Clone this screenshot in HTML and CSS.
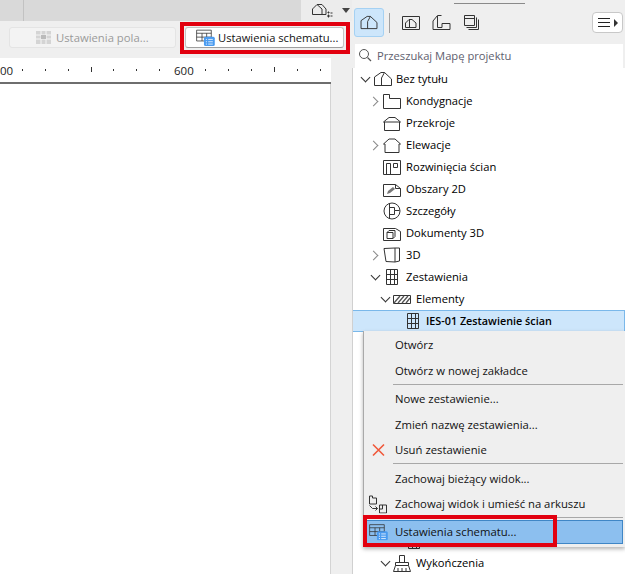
FILE: index.html
```html
<!DOCTYPE html>
<html lang="pl">
<head>
<meta charset="utf-8">
<title>Mapa projektu</title>
<link rel="stylesheet" href="styles.css">
</head>
<body>
<svg class="defs" width="0" height="0" aria-hidden="true">
  <defs>
    <symbol id="i-table" viewBox="0 0 24 22">
      <path d="M.5 1.500h19v14H.5zM.5 5.500h19M.5 10.500h19M7.500 5.500v10M13.500 5.500v10" fill="none" stroke="#333"/>
      <rect x="10" y="10" width="14" height="12" rx="2" fill="#4a9bf0"/>
      <path d="M12.500 13.500h1.500M15.500 13.500h6M12.500 16.500h1.500M15.500 16.500h6M12.500 19.500h1.500M15.500 19.500h6" stroke="#fff" fill="none"/>
    </symbol>
    <symbol id="i-house" viewBox="0 0 20 16">
      <path d="M1.500 14.500V6L8 1.500h3.500L18.500 8v6.500zM8.500 14.500V7L11.500 1.500" fill="none" stroke="#333"/>
    </symbol>
    <symbol id="i-grid" viewBox="0 0 14 18">
      <path d="M1.500 1.500h11v15h-11zM1.500 6.500h11M1.500 11.500h11M5.500 1.500v15M9.500 1.500v15" fill="none" stroke="#333"/>
    </symbol>
  </defs>
</svg>
<div class="app">
  <main class="left">
    <div class="tabbar">
      <div class="tab-empty"><span class="tab-edge"></span></div>
      <div class="tab-tool">
        <svg class="tool-icon" width="22" height="16" viewBox="0 0 22 16"><path d="M1.500 11.500V6L6 1.500h5L15 6v5.500zM6 1.500 11 6v5.500" fill="none" stroke="#333"/><path d="M17 9h1v1h-1zM17 12h1v2h-1zM19.500 10h2M19.500 13h2" fill="#333" stroke="#333"/></svg>
        <span class="caret-down"></span>
      </div>
    </div>
    <div class="buttonbar">
      <button class="btn btn-off" type="button">
        <svg width="16" height="13" viewBox="0 0 16 13"><path d="M0 0h15v13H0z" fill="#d4d4d4"/><path d="M5 0v13M10 0v13M0 4h15M0 8h15" stroke="#f5f5f5"/><path d="M5 4h5v4H5z" fill="#bbb"/></svg>
        <span>Ustawienia pola...</span>
      </button>
      <div class="mark-top">
        <button class="btn btn-on" type="button">
          <svg width="19" height="17"><use href="#i-table"/></svg>
          <span>Ustawienia schematu...</span>
        </button>
      </div>
    </div>
    <div class="canvas">
      <div class="ruler">
        <div class="ticks"></div>
        <span class="major m1"></span>
        <span class="major m2"></span>
        <span class="ruler-num n500">00</span>
        <span class="ruler-num n600">600</span>
      </div>
      <div class="sheet"></div>
    </div>
  </main>
  <aside class="right">
    <div class="grip"></div>
    <div class="toolbar">
      <span class="tool tool-on"><svg width="20" height="15"><use href="#i-house"/></svg></span>
      <span class="tool-sep"></span>
      <span class="tool"><svg width="18" height="14" viewBox="0 0 18 14"><path d="M.5.500h17v13H.5z" fill="none" stroke="#333"/><path d="M3.500 11.500V7L7 3.500h3l4 3.500v4.500zM7.500 4v7.500" fill="none" stroke="#333"/></svg></span>
      <span class="tool"><svg width="19" height="16" viewBox="0 0 19 16"><path d="M1 14.500V6L5.500.500h4M1 14.500h17v-6H10v4H5.500V1" fill="none" stroke="#333"/></svg></span>
      <span class="tool"><svg width="17" height="17" viewBox="0 0 17 17"><path d="M1.500 1.500h10v10h-10zM1.500 4.500h10M13.500 3.500v10h-10M15.500 5.500v10h-10" fill="none" stroke="#333"/></svg></span>
      <button class="menu-btn" type="button"><span class="bars"></span><span class="caret-right"></span></button>
    </div>
    <div class="search">
      <svg width="14" height="14" viewBox="0 0 14 14"><circle cx="6" cy="6" r="4.500" fill="none" stroke="#555"/><path d="M9.500 9.500 13 13" stroke="#555" stroke-width="1.300"/></svg>
      <span>Przeszukaj Mapę projektu</span>
    </div>
    <ul class="tree">
      <li class="row lv0"><span class="chev down"></span><svg class="ico" width="20" height="16"><use href="#i-house"/></svg><span>Bez tytułu</span></li>
      <li class="row lv1"><span class="chev"></span><svg class="ico" width="18" height="15" viewBox="0 0 18 15"><path d="M.5.500h6v4h11v10H.5z" fill="none" stroke="#333"/></svg><span>Kondygnacje</span></li>
      <li class="row lv1"><span class="nochev"></span><svg class="ico" width="18" height="15" viewBox="0 0 18 15"><path d="M.5 6 6 1.500h6L17.500 6M1.500 6v8.500h15V6M.5 6h17" fill="none" stroke="#333"/></svg><span>Przekroje</span></li>
      <li class="row lv1"><span class="chev"></span><svg class="ico" width="18" height="15" viewBox="0 0 18 15"><path d="M.5 6 6 1h6l5.500 5h-1.500v8.500H2V6z" fill="none" stroke="#333"/></svg><span>Elewacje</span></li>
      <li class="row lv1"><span class="nochev"></span><svg class="ico" width="18" height="15" viewBox="0 0 18 15"><path d="M.5.500h17v14H.5zM3.500 3.500h4v11h-4zM10.500 3.500h4v4h-4z" fill="none" stroke="#333"/></svg><span>Rozwinięcia ścian</span></li>
      <li class="row lv1"><span class="nochev"></span><svg class="ico" width="18" height="15" viewBox="0 0 18 15"><path d="M.5 2.500h12l5 4v8H.500zM12.500 2.500v4h5" fill="none" stroke="#333"/><path d="M4 12l1-3 5-4 2 2-5 4z" fill="#777"/></svg><span>Obszary 2D</span></li>
      <li class="row lv1"><span class="nochev"></span><svg class="ico" width="18" height="18" viewBox="0 0 18 18"><circle cx="9" cy="9" r="8" fill="none" stroke="#333"/><path d="M6.500 1.500v15M6.500 5.500h5v3h5M6.500 12.500h5v-4" fill="none" stroke="#333"/></svg><span>Szczegóły</span></li>
      <li class="row lv1"><span class="nochev"></span><svg class="ico" width="18" height="15" viewBox="0 0 18 15"><path d="M.5 2.500h12l5 3v9H.500zM4 6.500h6v6H4zM4 6.500l2-2h6v6l-2 2" fill="none" stroke="#333"/></svg><span>Dokumenty 3D</span></li>
      <li class="row lv1"><span class="chev"></span><svg class="ico" width="18" height="16" viewBox="0 0 18 16"><path d="M1 1.500 3 14.500 12 15V1zM12 1h4.500v13L12 15" fill="none" stroke="#333"/></svg><span>3D</span></li>
      <li class="row lv1"><span class="chev down"></span><svg class="ico" width="18" height="18" viewBox="-2 0 18 18"><use href="#i-grid" width="14" height="18"/></svg><span>Zestawienia</span></li>
      <li class="row lv2"><span class="chev down"></span><svg class="ico" width="18" height="9" viewBox="0 0 18 9"><path d="M.5.500h17v8H.5z" fill="none" stroke="#333"/><path d="M1 8 7 1M5 8l6-7M9 8l6-7M13 8l4-5" stroke="#555" fill="none" stroke-width="1.300"/></svg><span>Elementy</span></li>
      <li class="row sel"><svg class="ico" width="14" height="18"><use href="#i-grid"/></svg><span>IES-01 Zestawienie ścian</span></li>
      <li class="row under"></li>
      <li class="row under"></li>
      <li class="row under"></li>
      <li class="row under"></li>
      <li class="row under"></li>
      <li class="row under"></li>
      <li class="row under"></li>
      <li class="row under"></li>
      <li class="row under"></li>
      <li class="row leaf"><svg class="ico" width="14" height="18"><use href="#i-grid"/></svg></li>
      <li class="row lv2"><span class="chev down"></span><svg class="ico" width="18" height="17" viewBox="0 0 18 17"><path d="M6.500.500h5v7h-5zM2.500 7.500h13v3h-13zM2.500 10.500l-2 6h17l-2-6M5 16v-3M9 16v-3M13 16v-3" fill="none" stroke="#333"/></svg><span>Wykończenia</span></li>
    </ul>
  </aside>
</div>
<ul class="context">
  <li class="item">Otwórz</li>
  <li class="item">Otwórz w nowej zakładce</li>
  <li class="sep"></li>
  <li class="item">Nowe zestawienie...</li>
  <li class="item">Zmień nazwę zestawienia...</li>
  <li class="item"><svg class="item-ico ico-x" width="13" height="13" viewBox="0 0 13 13"><path d="M1 1l11 11M12 1 1 12" stroke="#f0583a" stroke-width="1.600" fill="none"/></svg>Usuń zestawienie</li>
  <li class="sep"></li>
  <li class="item">Zachowaj bieżący widok...</li>
  <li class="item"><svg class="item-ico" width="19" height="19" viewBox="0 0 19 19"><path d="M1.500 1.500h3v2h4v6h-7zM1.500 11l3 3h5M7.500 12l2 2-2 2M11.500 10.500h7v8h-7zM11.500 14.500h3v-4" fill="none" stroke="#333"/></svg>Zachowaj widok i umieść na arkuszu</li>
  <li class="sep"></li>
  <li class="item hot"><svg class="item-ico" width="19" height="17"><use href="#i-table"/></svg>Ustawienia schematu...</li>
</ul>
<div class="mark-menu"></div>
</body>
</html>
```
FILE: styles.css
```css
* { box-sizing: border-box; }
html, body { margin: 0; height: 100%; overflow: hidden; }
body {
  width: 625px;
  height: 574px;
  position: relative;
  font-family: "Open Sans", "Noto Sans", sans-serif;
  font-size: 11.2px;
  color: #000;
  background: #efefef;
}
.defs { position: absolute; }
.app { display: flex; height: 574px; }

/* left */
.left { width: 352px; flex: none; display: flex; flex-direction: column; }
.tabbar { height: 21px; flex: none; display: flex; background: #d9d9d9; }
.tab-empty { width: 301px; }
.tab-edge { display: block; width: 1px; height: 21px; margin-left: 23px; background: #c2c2c2; }
.tab-tool { flex: 1; background: #ececec; display: flex; align-items: center; gap: 9px; padding-left: 10px; }
.caret-down { width: 0; height: 0; border: 4px solid transparent; border-top: 5px solid #444; border-bottom: 0; }
.buttonbar { height: 37px; flex: none; display: flex; align-items: flex-start; padding: 1px 0 0 9px; gap: 4px; }
.btn {
  font: inherit;
  height: 21px;
  border-radius: 3px;
  display: flex;
  align-items: center;
  padding: 0;
  white-space: nowrap;
}
.btn svg { flex: none; }
.btn-off {
  width: 167px;
  margin-top: 5px;
  padding-left: 26px;
  gap: 4px;
  font-size: 11.3px;
  color: #9a9a9a;
  background: #f3f3f3;
  border: 1px solid #e4e4e4;
}
.btn-on {
  width: 159px;
  padding-left: 10px;
  gap: 3px;
  font-size: 11.2px;
  color: #111;
  background: #fff;
  border: 1px solid #c4c4c4;
  border-bottom-color: #9f9f9f;
}
.mark-top {
  width: 170px;
  height: 32px;
  flex: none;
  padding: 1px 0 0 1px;
  border: 4px solid #e2000f;
}
.canvas { flex: 1; display: flex; flex-direction: column; margin-right: 21px; }
.ruler { height: 26px; flex: none; background: #fff; position: relative; border-bottom: 2px solid #6e6e6e; }
.ruler-num { position: absolute; top: 5px; font-size: 11.5px; color: #222; background: #fff; }
.n500 { left: 0; }
.n600 { left: 174px; }
.ticks {
  position: absolute;
  left: 0; right: 0; top: 11px; height: 2px;
  background-image: repeating-linear-gradient(90deg, transparent 0 21.9px, #333 21.9px 22.9px);
}
.major { position: absolute; top: 9px; width: 1px; height: 5px; background: #333; }
.m1 { left: 91px; }
.m2 { left: 274px; }
.sheet { flex: 1; background: #fff; border-right: 1px solid #d4d4d4; }

/* right */
.right { flex: 1; min-width: 0; display: flex; flex-direction: column; }
.grip { height: 1px; flex: none; width: 71px; margin: 3px 0 0 102px; background: #8a8a8a; }
.toolbar { height: 29px; flex: none; margin-top: 4px; display: flex; align-items: center; padding-left: 2px; }
.tool { width: 30px; height: 29px; display: flex; align-items: center; justify-content: center; }
.tool-on { background: #cde6fb; border: 1px solid #a5d1f3; border-radius: 3px; }
.tool-sep { width: 1px; height: 20px; background: #a0a0a0; margin: 0 6px 0 5px; }
.menu-btn {
  margin-left: auto;
  margin-right: 2px;
  width: 31px; height: 21px;
  border: 1px solid #c8c8c8;
  border-radius: 4px;
  background: #fff;
  display: flex; align-items: center; justify-content: center; gap: 4px;
  padding: 0;
}
.bars { width: 12px; height: 9px; border-top: 1px solid #222; border-bottom: 1px solid #222; position: relative; }
.bars::after { content: ""; position: absolute; left: 0; right: 0; top: 3px; height: 1px; background: #222; }
.caret-right { width: 0; height: 0; border: 4px solid transparent; border-left: 4px solid #333; border-right: 0; }
.search {
  height: 24px;
  flex: none;
  margin: 7px 2px 0 3px;
  background: #fff;
  display: flex; align-items: center; gap: 5px;
  padding: 0 0 2px 3px;
  color: #5e5e6e;
}
.tree {
  list-style: none;
  margin: 0;
  padding: 0;
  flex: 1;
  background: #fff;
  border-left: 1px solid #d0d0d0;
  overflow: hidden;
}
.row { height: 22px; flex: none; display: flex; align-items: center; white-space: nowrap; }
.row > span:last-child { margin-bottom: 2px; }
.chev, .nochev { width: 9px; height: 9px; flex: none; margin-right: 4px; }
.chev { position: relative; }
.chev::before {
  content: "";
  position: absolute; left: 0; top: 1px;
  width: 6px; height: 6px;
  border-right: 1px solid #888;
  border-top: 1px solid #888;
  transform: rotate(45deg);
}
.chev.down::before { border-color: #333; transform: rotate(135deg); left: 2px; top: -1px; }
.lv0 { padding-left: 7px; }
.lv1 { padding-left: 17px; }
.lv2 { padding-left: 27px; }
.ico { flex: none; margin-right: 5px; }
.lv0 .ico { margin-right: 3px; }
.sel {
  background: #cde6fb;
  border: 1px solid #7ab8ea;
  margin-left: -1px;
  padding-left: 53px;
  font-size: 10.8px;
  font-weight: 600;
  gap: 6px;
}
.sel .ico { margin-right: 0; }
.leaf { padding-left: 54px; }

/* context menu */
.context {
  position: absolute;
  left: 363px; top: 331px;
  width: 262px; height: 216px;
  margin: 0;
  padding: 1.500px 2px 0 0;
  list-style: none;
  font-size: 11.3px;
  background: #efefef;
  border-left: 1px solid #a9a9a9;
  box-shadow: 0 2px 4px rgba(0,0,0,.3);
}
.item { height: 25.500px; display: flex; align-items: center; padding: 0 0 1px 31px; position: relative; white-space: nowrap; color: #111; }
.item-ico { position: absolute; left: 4px; top: 50%; transform: translateY(-50%); }
.ico-x { left: 8px; }
.sep { height: 1px; margin: 0 0 2px 29px; background: #a8a8a8; }
.hot { background: #8cbfef; border: 1px solid #3f86c6; margin-left: 2px; height: 24px; padding-left: 28px; }
.hot .item-ico { left: 2px; }
.mark-menu {
  position: absolute;
  left: 363px; top: 515px;
  width: 194px; height: 32px;
  border: 4px solid #e2000f;
}
```
